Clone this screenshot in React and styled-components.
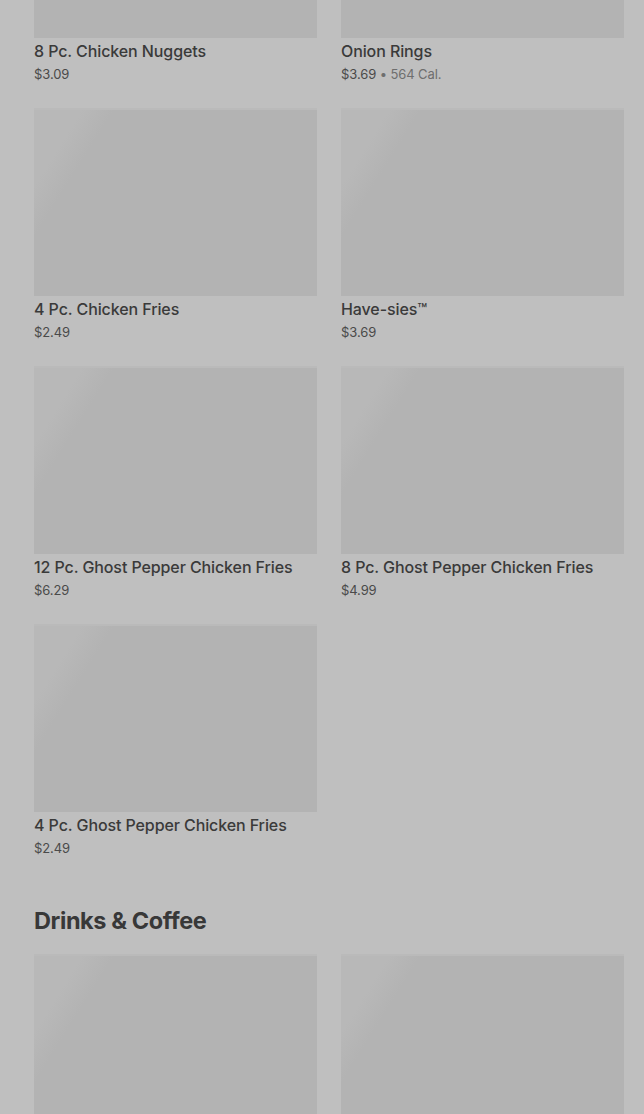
import styled, { createGlobalStyle } from "styled-components";

const GlobalStyle = createGlobalStyle`
  html, body {
    margin: 0;
    padding: 0;
    background: #bfbfbf;
    overflow: hidden;
  }
  body {
    font-family: Inter, "Liberation Sans", sans-serif;
    color: #383838;
  }
`;

const Page = styled.main`
  height: 1114px;
  overflow: hidden;
  background: #bfbfbf;
  padding: 0 20px 0 34px;
`;

const Scroller = styled.div`
  margin-top: -150px;
`;

const Section = styled.section`
  padding-bottom: 49px;
`;

const SectionTitle = styled.h2`
  margin: 0 0 17px;
  font-size: 23.5px;
  line-height: 32px;
  font-weight: 700;
  letter-spacing: -0.4px;
  color: #383838;
`;

const Grid = styled.div`
  display: grid;
  grid-template-columns: 283px 283px;
  column-gap: 24px;
  row-gap: 26px;
`;

const Card = styled.article`
  display: flex;
  flex-direction: column;
`;

const Thumb = styled.div`
  height: 188px;
  border-top: 2px solid #bababa;
  box-sizing: border-box;
  background: linear-gradient(
    122deg,
    #b8b8b8 0%,
    #b8b8b8 12%,
    #b3b3b3 20%,
    #b3b3b3 100%
  );
`;

const Name = styled.div`
  margin-top: 3px;
  font-size: 16px;
  line-height: 20px;
  font-weight: 500;
  letter-spacing: -0.1px;
  color: #3a3a3a;
`;

const Meta = styled.div`
  margin-top: 5px;
  font-size: 13px;
  line-height: 16px;
  letter-spacing: -0.1px;
  color: #4a4a4a;
`;

const Cal = styled.span`
  color: #6e6e6e;
`;

const sides = [
  { name: "8 Pc. Chicken Nuggets", price: "$3.09" },
  { name: "Onion Rings", price: "$3.69", cal: "564 Cal." },
  { name: "4 Pc. Chicken Fries", price: "$2.49" },
  { name: "Have-sies™", price: "$3.69" },
  { name: "12 Pc. Ghost Pepper Chicken Fries", price: "$6.29" },
  { name: "8 Pc. Ghost Pepper Chicken Fries", price: "$4.99" },
  { name: "4 Pc. Ghost Pepper Chicken Fries", price: "$2.49" },
];

const MenuItem = ({ name, price, cal }) => (
  <Card>
    <Thumb />
    <Name>{name}</Name>
    <Meta>
      {price}
      {cal && <Cal> • {cal}</Cal>}
    </Meta>
  </Card>
);

export default function App() {
  return (
    <>
      <GlobalStyle />
      <Page>
        <Scroller>
          <Section>
            <Grid>
              {sides.map((item) => (
                <MenuItem key={item.name} {...item} />
              ))}
            </Grid>
          </Section>
          <Section>
            <SectionTitle>Drinks &amp; Coffee</SectionTitle>
            <Grid>
              <Card>
                <Thumb />
              </Card>
              <Card>
                <Thumb />
              </Card>
            </Grid>
          </Section>
        </Scroller>
      </Page>
    </>
  );
}
